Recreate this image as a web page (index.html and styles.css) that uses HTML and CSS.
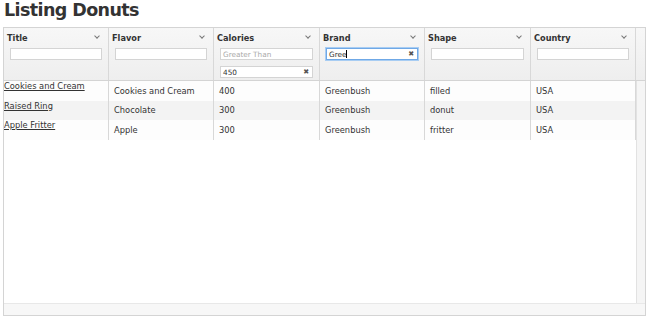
FILE: index.html
```html
<!DOCTYPE html>
<html>
<head>
<meta charset="utf-8">
<link rel="stylesheet" href="styles.css">
</head>
<body>
<h1 class="page-title">Listing Donuts</h1>
<div class="grid">
  <div class="grid-header">
    <div class="hcell">
      <div class="htop"><span class="hname">Title</span><span class="chev"></span></div>
      <div class="filter"><span class="input"></span></div>
    </div>
    <div class="hcell">
      <div class="htop"><span class="hname">Flavor</span><span class="chev"></span></div>
      <div class="filter"><span class="input"></span></div>
    </div>
    <div class="hcell">
      <div class="htop"><span class="hname">Calories</span><span class="chev"></span></div>
      <div class="filter"><span class="input placeholder">Greater Than</span></div>
      <div class="filter second"><span class="input">450<span class="clear">✖</span></span></div>
    </div>
    <div class="hcell">
      <div class="htop"><span class="hname">Brand</span><span class="chev"></span></div>
      <div class="filter"><span class="input focused">Gree<span class="caret"></span><span class="clear">✖</span></span></div>
    </div>
    <div class="hcell">
      <div class="htop"><span class="hname">Shape</span><span class="chev"></span></div>
      <div class="filter"><span class="input"></span></div>
    </div>
    <div class="hcell">
      <div class="htop"><span class="hname">Country</span><span class="chev"></span></div>
      <div class="filter"><span class="input"></span></div>
    </div>
    <div class="hcell-spacer"></div>
  </div>
  <div class="grid-body">
    <div class="viewport">
      <div class="row">
        <div class="cell link-cell"><a href="#">Cookies and Cream</a></div>
        <div class="cell">Cookies and Cream</div>
        <div class="cell">400</div>
        <div class="cell">Greenbush</div>
        <div class="cell">filled</div>
        <div class="cell">USA</div>
      </div>
      <div class="row alt">
        <div class="cell link-cell"><a href="#">Raised Ring</a></div>
        <div class="cell">Chocolate</div>
        <div class="cell">300</div>
        <div class="cell">Greenbush</div>
        <div class="cell">donut</div>
        <div class="cell">USA</div>
      </div>
      <div class="row">
        <div class="cell link-cell"><a href="#">Apple Fritter</a></div>
        <div class="cell">Apple</div>
        <div class="cell">300</div>
        <div class="cell">Greenbush</div>
        <div class="cell">fritter</div>
        <div class="cell">USA</div>
      </div>
    </div>
    <div class="vscroll"></div>
  </div>
  <div class="hscroll"></div>
</div>
</body>
</html>
```
FILE: styles.css
```css
html, body {
  margin: 0;
  padding: 0;
  background: #fff;
}
body {
  font-family: "DejaVu Sans", Verdana, sans-serif;
  color: #333;
  padding: 0 3px;
}
.page-title {
  margin: 0;
  height: 27px;
  font-size: 17.5px;
  font-weight: bold;
  letter-spacing: -0.6px;
  line-height: 21px;
  color: #333;
  padding-left: 1px;
}
.grid {
  height: 289px;
  border: 1px solid #d4d4d4;
  display: flex;
  flex-direction: column;
  box-sizing: border-box;
  width: 643px;
}
.grid-header {
  display: grid;
  grid-template-columns: 105px 105px 106px 105px 106px 105px 1fr;
  height: 52px;
  background: linear-gradient(#f7f7f7, #eeeeee);
  border-bottom: 1px solid #d4d4d4;
  flex: none;
}
.hcell {
  border-right: 1px solid #d8d8d8;
  padding: 0 6px 0 6px;
  font-size: 8.2px;
}
.htop {
  display: flex;
  justify-content: space-between;
  align-items: center;
  height: 19px;
  padding-left: 1px;
  margin-left: -4px;
}
.hname {
  font-weight: bold;
  color: #333;
}
.chev {
  width: 3px;
  height: 3px;
  border-right: 1px solid #777;
  border-bottom: 1px solid #777;
  transform: rotate(45deg);
  margin-right: 3px;
  margin-top: -4px;
}
.filter {
  height: 14px;
  padding-top: 1px;
}
.filter.second {
  margin-top: 3px;
}
.input {
  display: flex;
  align-items: center;
  height: 10px;
  background: #fff;
  border: 1px solid #d4d4d4;
  font-size: 7.3px;
  padding: 0 3px 0 2px;
  color: #333;
  position: relative;
}
.input.placeholder {
  color: #aaa;
}
.input.focused {
  border-color: #6fa8e6;
  box-shadow: 0 0 0 1px #a8cdf3;
}
.caret {
  display: inline-block;
  width: 1px;
  height: 8px;
  background: #000;
}
.clear {
  margin-left: auto;
  font-size: 7px;
  color: #555;
}
.grid-body {
  flex: 1;
  display: flex;
  min-height: 0;
}
.viewport {
  flex: 1;
}
.row {
  display: grid;
  grid-template-columns: 105px 105px 106px 105px 106px 105px;
  height: 19.5px;
  background: #fdfdfd;
}
.row.alt {
  background: #f3f3f3;
}
.cell {
  border-right: 1px solid #d8d8d8;
  font-size: 8.3px;
  display: flex;
  align-items: center;
  padding-left: 5px;
  white-space: nowrap;
  overflow: hidden;
}
.link-cell {
  align-items: flex-start;
  padding-left: 0;
  padding-top: 0;
}
.link-cell a {
  color: #333;
  text-decoration: underline;
}
.vscroll {
  width: 10px;
  background: #f5f5f5;
  border-left: 1px solid #e2e2e2;
}
.hscroll {
  height: 11px;
  flex: none;
  background: #f7f7f7;
  border-top: 1px solid #e8e8e8;
  background-image: radial-gradient(#e4e4e4 0.6px, transparent 0.7px);
  background-size: 4px 4px;
  background-position: 0 4px;
}
```
